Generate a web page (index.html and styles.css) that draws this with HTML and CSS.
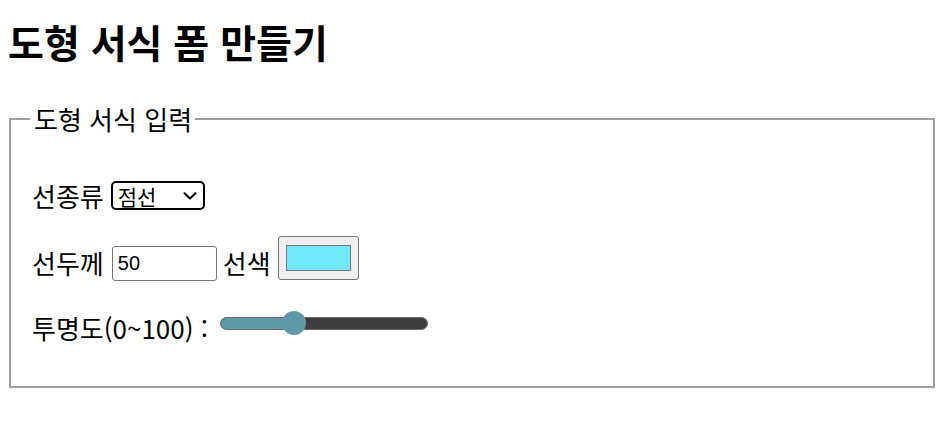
FILE: index.html
```html
<!DOCTYPE html>
<html lang="ko">
<head>
<meta charset="utf-8">
<link rel="stylesheet" href="styles.css">
</head>
<body>
<h1 class="title">도형 서식 폼 만들기</h1>
<fieldset class="box">
  <legend class="box-legend">도형 서식 입력</legend>
  <div class="row row-type">
    <label class="lbl">선종류</label>
    <div class="select"><span class="select-text">점선</span>
      <svg class="chev" width="14" height="8" viewBox="0 0 14 8"><path d="M1.5 1.2 L7 6.5 L12.5 1.2" fill="none" stroke="#000" stroke-width="2" stroke-linecap="round" stroke-linejoin="round"/></svg>
    </div>
  </div>
  <div class="row row-width">
    <label class="lbl lbl-width">선두께</label>
    <div class="text-input">50</div>
    <label class="lbl lbl-color">선색</label>
    <div class="color-btn"><div class="swatch"></div></div>
  </div>
  <div class="row row-alpha">
    <label class="lbl lbl-alpha">투명도(0~100) :</label>
    <div class="range"><div class="range-fill"></div><div class="thumb"></div></div>
  </div>
</fieldset>
</body>
</html>
```
FILE: styles.css
```css
html, body { margin: 0; padding: 0; background: #fff; }
body {
  padding: 0 6px 0 9px;
  font-family: "Noto Sans CJK KR", "Noto Sans", sans-serif;
  color: #000;
}
.title {
  margin: 0 0 0 -1px;
  padding-top: 15px;
  height: 52px;
  font-size: 39px;
  line-height: 52px;
  font-weight: 700;
}
.box {
  margin: 37px 0 0 0;
  border: 2px solid #a0a0a0;
  padding: 47px 21px 50px 21px;
  min-width: 0;
}
.box-legend {
  font-size: 26px;
  padding: 0 3px 0 4px;
  margin-left: -2px;
  line-height: 30px;
}
.row {
  display: flex;
  align-items: center;
  font-size: 26px;
}
.lbl { line-height: 30px; white-space: nowrap; }
.row-type { height: 29px; }
.row-width { height: 45px; margin-top: 26px; align-items: flex-end; }
.row-alpha { height: 25px; margin-top: 30px; }
.lbl-width { line-height: 36px; }
.lbl-color { line-height: 36px; margin: 0 7px 0 6px; }
.lbl-alpha { margin-top: 8px; margin-right: 12px; }
.select {
  box-sizing: border-box;
  width: 94px; height: 29px;
  margin-left: 7px;
  border: 2px solid #000;
  border-radius: 5px;
  display: flex; align-items: center; justify-content: space-between;
  padding: 0 6px 0 5px;
  font-size: 21px;
}
.select-text { line-height: 24px; }
.chev { margin-top: 1px; }
.text-input {
  box-sizing: border-box;
  width: 105px; height: 35px;
  margin-left: 8px;
  border: 1px solid #767676;
  border-radius: 3px;
  font-family: "Liberation Sans", Arial, sans-serif;
  font-size: 20px;
  padding: 0 5px;
  display: flex; align-items: center;
}
.color-btn {
  box-sizing: border-box;
  width: 81px; height: 44px;
  margin-bottom: 1px;
  border: 1px solid #767676;
  border-radius: 3px;
  background: #efefef;
  padding: 8px 7px 8px 7px;
}
.swatch {
  height: 100%;
  background: #6fe9fb;
  border: 1px solid #777;
  box-sizing: border-box;
}
.range {
  position: relative;
  box-sizing: border-box;
  width: 208px; height: 13px;
  border-radius: 7px;
  background: #3d3d3d;
  border: 1px solid #6e6e6e;
}
.range-fill {
  width: 72px; height: 100%;
  border-radius: 6px 0 0 6px;
  background: #5f99a9;
}
.thumb {
  position: absolute;
  left: 61px; top: -7px;
  width: 24px; height: 24px;
  border-radius: 50%;
  background: #5f99a9;
}
```
